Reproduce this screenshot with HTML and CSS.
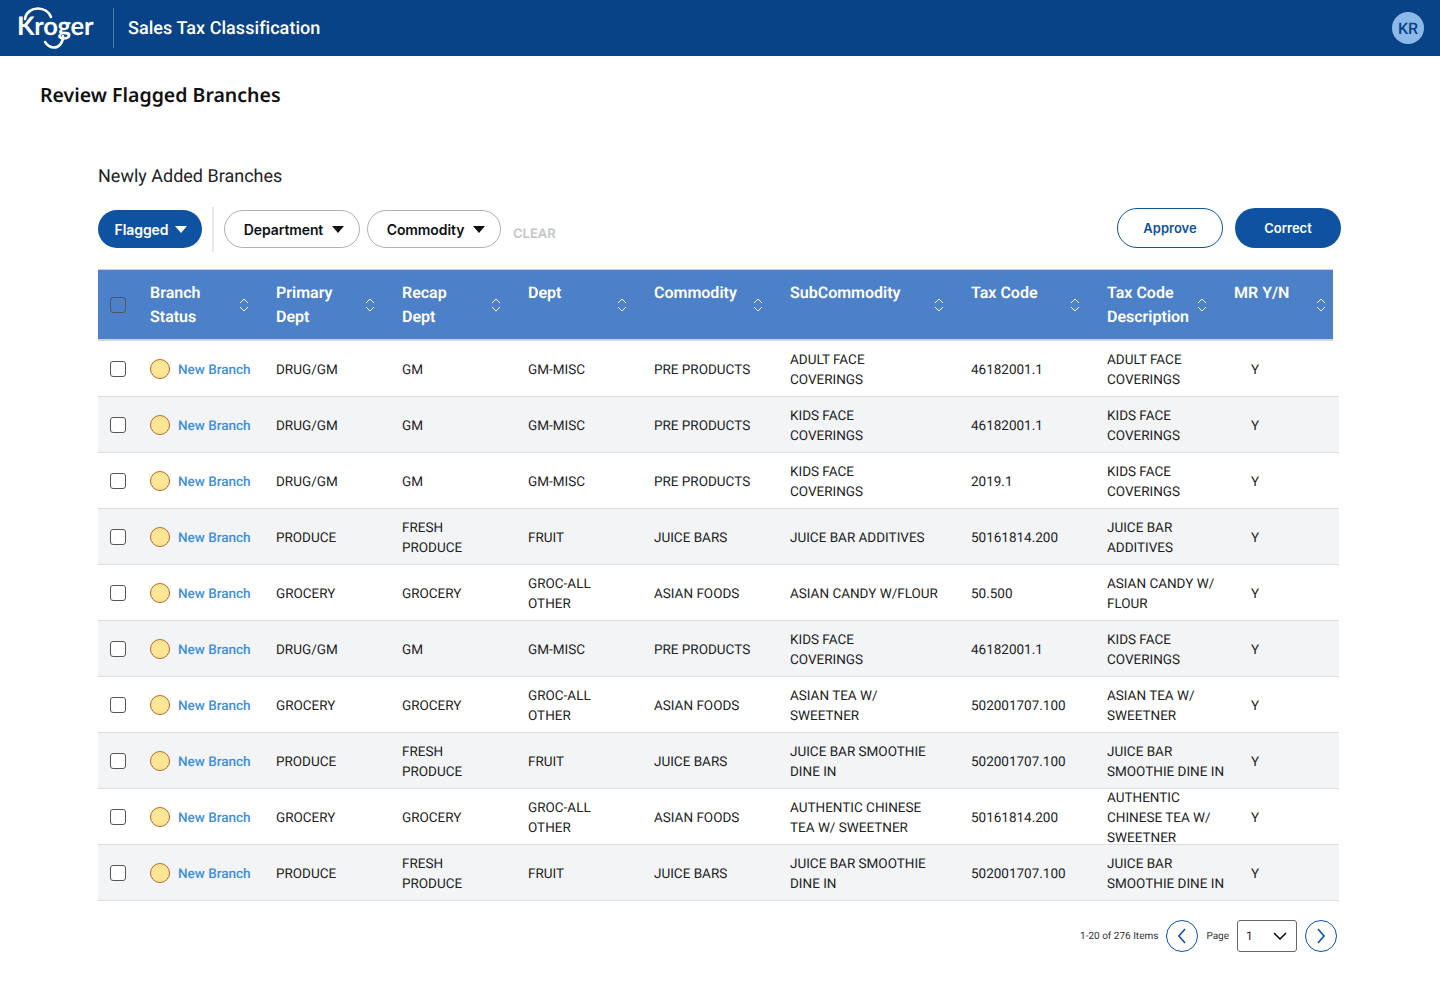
FILE: index.html
```html
<!DOCTYPE html>
<html lang="en">
<head>
<meta charset="utf-8">
<title>Sales Tax Classification</title>
<link rel="stylesheet" href="styles.css">
</head>
<body>
<header class="topbar">
  <svg class="logo" width="80" height="44" viewBox="0 0 80 44" aria-label="Kroger">
    <text class="logo-text" x="-1" y="29">Kroger</text>
    <path d="M7 13 C8 6 14 2.5 20 2.5 C26 2.5 31 6 33 11" fill="none" stroke="#fff" stroke-width="2.6" stroke-linecap="round"/>
    <path d="M45 30 C45 37 41 41.5 36 41.5 C32 41.5 29 39 27 36" fill="none" stroke="#fff" stroke-width="2.6" stroke-linecap="round"/>
  </svg>
  <div class="topbar-divider"></div>
  <div class="app-title">Sales Tax Classification</div>
  <div class="avatar">KR</div>
</header>
<main>
  <h1 class="page-title">Review Flagged Branches</h1>
  <section class="content">
    <h2 class="section-title">Newly Added Branches</h2>
    <div class="toolbar">
      <button class="pill pill-primary filter">Flagged <span class="caret caret-white"></span></button>
      <div class="toolbar-divider"></div>
      <button class="pill pill-plain filter">Department <span class="caret"></span></button>
      <button class="pill pill-plain filter">Commodity <span class="caret"></span></button>
      <span class="clear">CLEAR</span>
      <div class="actions">
        <button class="pill action pill-outline">Approve</button>
        <button class="pill action pill-solid">Correct</button>
      </div>
    </div>
    <div class="table">
      <div class="row head">
        <div class="cell c0"><span class="check check-head"></span></div>
        <div class="cell c1"><span class="hlabel">Branch<br>Status</span><svg class="sort" viewBox="0 0 10 14"><path d="M1 5 L5 1 L9 5 M1 9 L5 13 L9 9"/></svg></div>
        <div class="cell c2"><span class="hlabel">Primary<br>Dept</span><svg class="sort" viewBox="0 0 10 14"><path d="M1 5 L5 1 L9 5 M1 9 L5 13 L9 9"/></svg></div>
        <div class="cell c3"><span class="hlabel">Recap<br>Dept</span><svg class="sort" viewBox="0 0 10 14"><path d="M1 5 L5 1 L9 5 M1 9 L5 13 L9 9"/></svg></div>
        <div class="cell c4"><span class="hlabel">Dept<br>&nbsp;</span><svg class="sort" viewBox="0 0 10 14"><path d="M1 5 L5 1 L9 5 M1 9 L5 13 L9 9"/></svg></div>
        <div class="cell c5"><span class="hlabel">Commodity<br>&nbsp;</span><svg class="sort" viewBox="0 0 10 14"><path d="M1 5 L5 1 L9 5 M1 9 L5 13 L9 9"/></svg></div>
        <div class="cell c6"><span class="hlabel">SubCommodity<br>&nbsp;</span><svg class="sort" viewBox="0 0 10 14"><path d="M1 5 L5 1 L9 5 M1 9 L5 13 L9 9"/></svg></div>
        <div class="cell c7"><span class="hlabel">Tax Code<br>&nbsp;</span><svg class="sort" viewBox="0 0 10 14"><path d="M1 5 L5 1 L9 5 M1 9 L5 13 L9 9"/></svg></div>
        <div class="cell c8"><span class="hlabel">Tax Code<br>Description</span><svg class="sort" viewBox="0 0 10 14"><path d="M1 5 L5 1 L9 5 M1 9 L5 13 L9 9"/></svg></div>
        <div class="cell c9"><span class="hlabel">MR Y/N<br>&nbsp;</span><svg class="sort" viewBox="0 0 10 14"><path d="M1 5 L5 1 L9 5 M1 9 L5 13 L9 9"/></svg></div>
      </div>
      <div class="row">
        <div class="cell c0"><span class="check"></span></div><div class="cell c1"><span class="dot"></span><span class="status">New Branch</span></div>
        <div class="cell c2">DRUG/GM</div><div class="cell c3">GM</div><div class="cell c4">GM-MISC</div><div class="cell c5">PRE PRODUCTS</div>
        <div class="cell c6">ADULT FACE<br>COVERINGS</div><div class="cell c7">46182001.1</div><div class="cell c8">ADULT FACE<br>COVERINGS</div><div class="cell c9">Y</div>
      </div>
      <div class="row alt">
        <div class="cell c0"><span class="check"></span></div><div class="cell c1"><span class="dot"></span><span class="status">New Branch</span></div>
        <div class="cell c2">DRUG/GM</div><div class="cell c3">GM</div><div class="cell c4">GM-MISC</div><div class="cell c5">PRE PRODUCTS</div>
        <div class="cell c6">KIDS FACE<br>COVERINGS</div><div class="cell c7">46182001.1</div><div class="cell c8">KIDS FACE<br>COVERINGS</div><div class="cell c9">Y</div>
      </div>
      <div class="row">
        <div class="cell c0"><span class="check"></span></div><div class="cell c1"><span class="dot"></span><span class="status">New Branch</span></div>
        <div class="cell c2">DRUG/GM</div><div class="cell c3">GM</div><div class="cell c4">GM-MISC</div><div class="cell c5">PRE PRODUCTS</div>
        <div class="cell c6">KIDS FACE<br>COVERINGS</div><div class="cell c7">2019.1</div><div class="cell c8">KIDS FACE<br>COVERINGS</div><div class="cell c9">Y</div>
      </div>
      <div class="row alt">
        <div class="cell c0"><span class="check"></span></div><div class="cell c1"><span class="dot"></span><span class="status">New Branch</span></div>
        <div class="cell c2">PRODUCE</div><div class="cell c3">FRESH<br>PRODUCE</div><div class="cell c4">FRUIT</div><div class="cell c5">JUICE BARS</div>
        <div class="cell c6">JUICE BAR ADDITIVES</div><div class="cell c7">50161814.200</div><div class="cell c8">JUICE BAR<br>ADDITIVES</div><div class="cell c9">Y</div>
      </div>
      <div class="row">
        <div class="cell c0"><span class="check"></span></div><div class="cell c1"><span class="dot"></span><span class="status">New Branch</span></div>
        <div class="cell c2">GROCERY</div><div class="cell c3">GROCERY</div><div class="cell c4">GROC-ALL<br>OTHER</div><div class="cell c5">ASIAN FOODS</div>
        <div class="cell c6">ASIAN CANDY W/FLOUR</div><div class="cell c7">50.500</div><div class="cell c8">ASIAN CANDY W/<br>FLOUR</div><div class="cell c9">Y</div>
      </div>
      <div class="row alt">
        <div class="cell c0"><span class="check"></span></div><div class="cell c1"><span class="dot"></span><span class="status">New Branch</span></div>
        <div class="cell c2">DRUG/GM</div><div class="cell c3">GM</div><div class="cell c4">GM-MISC</div><div class="cell c5">PRE PRODUCTS</div>
        <div class="cell c6">KIDS FACE<br>COVERINGS</div><div class="cell c7">46182001.1</div><div class="cell c8">KIDS FACE<br>COVERINGS</div><div class="cell c9">Y</div>
      </div>
      <div class="row">
        <div class="cell c0"><span class="check"></span></div><div class="cell c1"><span class="dot"></span><span class="status">New Branch</span></div>
        <div class="cell c2">GROCERY</div><div class="cell c3">GROCERY</div><div class="cell c4">GROC-ALL<br>OTHER</div><div class="cell c5">ASIAN FOODS</div>
        <div class="cell c6">ASIAN TEA W/<br>SWEETNER</div><div class="cell c7">502001707.100</div><div class="cell c8">ASIAN TEA W/<br>SWEETNER</div><div class="cell c9">Y</div>
      </div>
      <div class="row alt">
        <div class="cell c0"><span class="check"></span></div><div class="cell c1"><span class="dot"></span><span class="status">New Branch</span></div>
        <div class="cell c2">PRODUCE</div><div class="cell c3">FRESH<br>PRODUCE</div><div class="cell c4">FRUIT</div><div class="cell c5">JUICE BARS</div>
        <div class="cell c6">JUICE BAR SMOOTHIE<br>DINE IN</div><div class="cell c7">502001707.100</div><div class="cell c8">JUICE BAR<br>SMOOTHIE DINE IN</div><div class="cell c9">Y</div>
      </div>
      <div class="row">
        <div class="cell c0"><span class="check"></span></div><div class="cell c1"><span class="dot"></span><span class="status">New Branch</span></div>
        <div class="cell c2">GROCERY</div><div class="cell c3">GROCERY</div><div class="cell c4">GROC-ALL<br>OTHER</div><div class="cell c5">ASIAN FOODS</div>
        <div class="cell c6">AUTHENTIC CHINESE<br>TEA W/ SWEETNER</div><div class="cell c7">50161814.200</div><div class="cell c8">AUTHENTIC<br>CHINESE TEA W/<br>SWEETNER</div><div class="cell c9">Y</div>
      </div>
      <div class="row alt">
        <div class="cell c0"><span class="check"></span></div><div class="cell c1"><span class="dot"></span><span class="status">New Branch</span></div>
        <div class="cell c2">PRODUCE</div><div class="cell c3">FRESH<br>PRODUCE</div><div class="cell c4">FRUIT</div><div class="cell c5">JUICE BARS</div>
        <div class="cell c6">JUICE BAR SMOOTHIE<br>DINE IN</div><div class="cell c7">502001707.100</div><div class="cell c8">JUICE BAR<br>SMOOTHIE DINE IN</div><div class="cell c9">Y</div>
      </div>
    </div>
    <div class="pager">
      <span class="pager-text">1-20 of 276 Items</span>
      <button class="page-btn"><svg width="10" height="16" viewBox="0 0 10 16"><path d="M8 1 L2 8 L8 15"/></svg></button>
      <span class="pager-text page-label">Page</span>
      <div class="page-select"><span>1</span><svg width="14" height="8" viewBox="0 0 14 8"><path d="M1 1 L7 7 L13 1"/></svg></div>
      <button class="page-btn"><svg width="10" height="16" viewBox="0 0 10 16"><path d="M2 1 L8 8 L2 15"/></svg></button>
    </div>
  </section>
</main>
</body>
</html>
```

FILE: styles.css
```css
* { box-sizing: border-box; }
html, body { margin: 0; padding: 0; }
body { background: #fff; font-family: Roboto, "Liberation Sans", sans-serif; color: #1f1f1f; height: 1005px; overflow: hidden; text-rendering: geometricPrecision; }
button { font: inherit; margin: 0; }

.topbar { height: 56px; background: #084388; display: flex; align-items: center; padding: 0 16px 0 18px; color: #fff; }
.logo { flex: none; width: 80px; height: 44px; }
.logo-text { font-family: Lato, sans-serif; font-weight: 700; font-size: 25.5px; fill: #fff; letter-spacing: -0.2px; }
.topbar-divider { width: 1px; height: 40px; background: #4d78ab; margin-left: 15px; }
.app-title { font-size: 18px; line-height: 22px; font-weight: 500; padding-top: 2px; margin: 0 0 0 14px; flex: 1; letter-spacing: 0.05px; }
.avatar { width: 32px; height: 32px; border-radius: 50%; background: #8db9e8; color: #084388; display: flex; align-items: center; justify-content: center; font-size: 16px; font-weight: 500; }

.page-title { margin: 0; padding: 27px 0 0 40px; font-family: "Noto Sans", sans-serif; font-size: 19.5px; line-height: 24px; font-weight: 600; color: #111; }
.content { padding: 58px 0 0 98px; width: 1341px; }
.section-title { margin: 0; font-size: 18px; line-height: 24px; font-weight: 400; color: #222; }

.toolbar { display: flex; align-items: flex-start; margin-top: 18px; height: 62px; }
.pill { border-radius: 19px; font-weight: 600; font-family: Inter, Roboto, sans-serif; font-size: 14px; letter-spacing: -0.1px; cursor: pointer; display: flex; align-items: center; justify-content: center; }
.filter { height: 38px; margin-top: 3px; gap: 8px; }
.pill-primary { width: 104px; background: #0f52a2; color: #fff; border: 0; padding-left: 8px; gap: 6px; }
.pill-plain { background: #fff; border: 1px solid #aeb2b6; color: #111; }
.pill-plain:nth-of-type(2) { width: 136px; padding: 0 0 0 4px; }
.pill-plain:nth-of-type(3) { width: 134px; margin-left: 7px; padding: 0 0 0 4px; }
.toolbar-divider { width: 2px; height: 45px; background: #e8e9ec; margin: 0 10px 0 10px; }
.caret { width: 0; height: 0; border-left: 6px solid transparent; border-right: 6px solid transparent; border-top: 7px solid #111; margin-left: 1px; }
.caret-white { border-top-color: #fff; }
.clear { font-size: 13px; font-weight: 600; font-family: Inter, Roboto, sans-serif; color: #c3c5c7; margin: 19px 0 0 12px; line-height: 17px; }
.actions { margin-left: auto; display: flex; gap: 12px; margin-top: 1px; }
.action { width: 106px; height: 40px; border-radius: 20px; font-size: 13px; letter-spacing: 0; }
.pill-outline { background: #fff; border: 1px solid #0f52a2; color: #0f52a2; }
.pill-solid { background: #0f52a2; border: 0; color: #fff; }

.table { width: 1241px; }
.row { display: flex; height: 56px; align-items: center; font-size: 13.5px; line-height: 20px; border-bottom: 1px solid #dcdee0; color: #222; }
.row.alt { background: #f3f4f6; }
.head { width: 1235px; height: 72px; background: #4c80c9; color: #fff; font-size: 16px; font-weight: 600; line-height: 24px; border-top: 1px solid #cfd3d6; border-bottom: 2px solid #cfd6da; }
.cell { flex: none; display: flex; align-items: center; }
.c0 { width: 52px; padding-left: 12px; }
.c1 { width: 126px; }
.c2, .c3, .c4, .c5 { width: 126px; }
.c5 { width: 136px; }
.c6 { width: 181px; }
.c7 { width: 136px; }
.c8 { width: 127px; }
.c9 { width: 99px; }
.row:not(.head) .c2, .row:not(.head) .c3, .row:not(.head) .c4, .row:not(.head) .c5,
.row:not(.head) .c6, .row:not(.head) .c7, .row:not(.head) .c8, .row:not(.head) .c9,
.status { padding-top: 2px; }
.row:not(.head) .c9 { padding-left: 17px; }
.head .cell { position: relative; height: 100%; align-items: center; }
.hlabel { display: block; }
.sort { position: absolute; width: 10px; height: 14px; top: 50%; margin-top: -7px; fill: none; stroke: #fff; stroke-width: 1; right: 27px; }
.head .c9 .sort { right: 7px; }
.check { display: block; width: 16px; height: 16px; border: 1px solid #555; border-radius: 3px; background: #fff; }
.check-head { background: transparent; }
.dot { width: 20px; height: 20px; border-radius: 50%; background: #ffe596; border: 1px solid #b9682a; flex: none; margin-right: 8px; }
.status { color: #3f8fdc; font-weight: 500; }

.pager { width: 1239px; display: flex; align-items: center; justify-content: flex-end; margin-top: 19px; height: 32px; }
.pager-text { font-size: 10px; color: #333; }
.page-btn { width: 32px; height: 32px; border-radius: 50%; border: 1px solid #0f52a2; background: #fff; display: flex; align-items: center; justify-content: center; padding: 0; margin-left: 8px; }
.page-btn svg, .page-select svg { fill: none; stroke: #0f52a2; stroke-width: 1.6; }
.page-label { margin-left: 8px; }
.page-select { width: 60px; height: 32px; border: 1px solid #666; border-radius: 3px; margin-left: 8px; display: flex; align-items: center; justify-content: space-between; padding: 0 9px 0 8px; font-size: 12px; color: #222; }
.page-select svg { stroke: #111; stroke-width: 1.6; }
```
